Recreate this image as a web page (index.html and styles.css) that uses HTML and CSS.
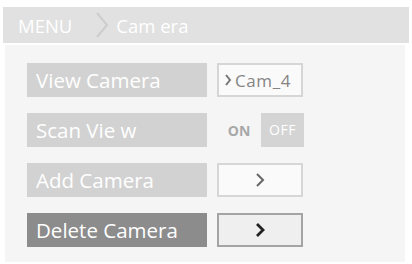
FILE: index.html
```html
<!doctype html>
<html lang="en">
  <head>
    <meta charset="UTF-8" />
    <meta name="viewport" content="width=device-width, initial-scale=1.0" />
    <title>Camera Menu</title>
    <link rel="stylesheet" href="styles.css">
  </head>
  <body>
    <header class="crumbs">
      <span class="crumb">MENU</span>
      <svg class="crumb-sep" width="16" height="28" viewBox="0 0 16 28">
        <polyline points="3,2 13,14 3,26" fill="none" stroke="#cdcdcd" stroke-width="2" />
      </svg>
      <span class="crumb">Cam era</span>
    </header>

    <section class="panel">
      <div class="row">
        <div class="label">View Camera</div>
        <button class="ctl value">
          <svg width="8" height="14" viewBox="0 0 8 14">
            <polyline points="2,2 6,7 2,12" fill="none" stroke="#777" stroke-width="2" />
          </svg>
          Cam_4
        </button>
      </div>
      <div class="row">
        <div class="label">Scan Vie w</div>
        <div class="toggle">
          <span class="on">ON</span>
          <span class="off">OFF</span>
        </div>
      </div>
      <div class="row">
        <div class="label">Add Camera</div>
        <button class="ctl">
          <svg width="10" height="16" viewBox="0 0 10 16">
            <polyline points="2,2 8,8 2,14" fill="none" stroke="#666" stroke-width="2" />
          </svg>
        </button>
      </div>
      <div class="row active">
        <div class="label">Delete Camera</div>
        <button class="ctl">
          <svg width="10" height="16" viewBox="0 0 10 16">
            <polyline points="2,2 8,8 2,14" fill="none" stroke="#222" stroke-width="2.8" />
          </svg>
        </button>
      </div>
    </section>
  </body>
</html>
```

FILE: styles.css
```css
* {
  box-sizing: border-box;
  margin: 0;
  padding: 0;
}
body {
  font-family: 'Open Sans', 'Liberation Sans', sans-serif;
  background: #ffffff;
  width: 412px;
  height: 264px;
  overflow: hidden;
}
.crumbs {
  display: flex;
  align-items: center;
  height: 36px;
  margin: 7px 3px 0 3px;
  padding-left: 15px;
  background: #e1e1e1;
  color: #ffffff;
  font-size: 18.5px;
}
.crumb-sep {
  margin: 0 6px 0 22px;
}
.panel {
  margin: 2px 7px 0 5px;
  height: 217px;
  background: #f5f5f5;
  padding: 18px 0 0 22px;
  display: flex;
  flex-direction: column;
  gap: 16px;
}
.row {
  display: flex;
  align-items: center;
  gap: 10px;
  height: 34px;
}
.label {
  width: 180px;
  height: 34px;
  background: #d2d2d2;
  color: #ffffff;
  font-size: 20.5px;
  line-height: 34px;
  padding-left: 9px;
  white-space: nowrap;
}
.row.active .label {
  background: #8c8c8c;
}
.ctl {
  width: 86px;
  height: 34px;
  border: 2px solid #d6d6d6;
  background: #fafafa;
  display: flex;
  align-items: center;
  justify-content: center;
  font-family: inherit;
}
.ctl.value {
  justify-content: flex-start;
  padding-left: 5px;
  gap: 3px;
  color: #858585;
  font-size: 17px;
  letter-spacing: 0.6px;
}
.row.active .ctl {
  border-color: #a4a4a4;
  background: #efefef;
}
.toggle {
  display: flex;
  align-items: center;
  height: 34px;
}
.on {
  width: 44px;
  text-align: center;
  color: #a8a8a8;
  font-size: 14px;
  font-weight: bold;
}
.off {
  width: 43px;
  height: 34px;
  line-height: 34px;
  text-align: center;
  background: #d4d4d4;
  color: #ffffff;
  font-size: 14px;
  letter-spacing: 0.5px;
}
```
